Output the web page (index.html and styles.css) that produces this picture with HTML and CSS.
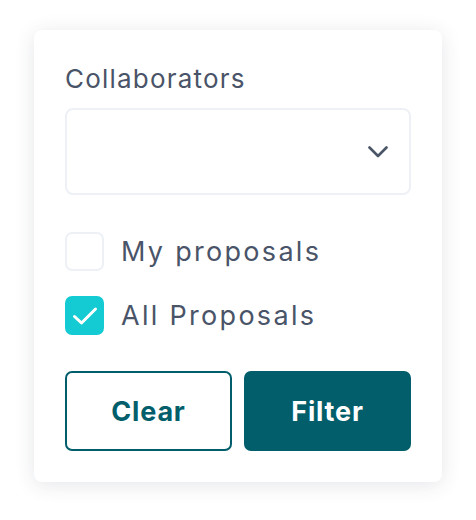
FILE: index.html
```html
<!DOCTYPE html>
<html>
<head>
<meta charset="utf-8">
<link rel="stylesheet" href="styles.css">
</head>
<body>
<div class="card">
  <div class="label">Collaborators</div>
  <div class="select">
    <svg class="chevron" width="20" height="12" viewBox="0 0 20 12"><path d="M1.5 1.5 L10 10 L18.5 1.5" fill="none" stroke="#4a5568" stroke-width="2.6" stroke-linecap="round" stroke-linejoin="round"/></svg>
  </div>
  <div class="options">
    <div class="option">
      <span class="box"></span>
      <span class="opt-text">My proposals</span>
    </div>
    <div class="option">
      <span class="box checked">
        <svg width="26" height="20" viewBox="0 0 26 20"><path d="M2.5 10.5 L9.5 17 L23.5 3" fill="none" stroke="#fff" stroke-width="3" stroke-linecap="round" stroke-linejoin="round"/></svg>
      </span>
      <span class="opt-text">All Proposals</span>
    </div>
  </div>
  <div class="buttons">
    <button class="btn btn-outline">Clear</button>
    <button class="btn btn-fill">Filter</button>
  </div>
</div>
</body>
</html>
```

FILE: styles.css
```css
* { box-sizing: border-box; }
html, body { margin: 0; background: #fff; }
body {
  padding: 30px 34px;
  font-family: Inter, "Noto Sans", sans-serif;
}
.card {
  width: 408px;
  height: 452px;
  background: #fff;
  border-radius: 8px;
  box-shadow: 0 3px 20px rgba(40, 50, 70, 0.12);
  padding: 34px 31px 30px;
  display: flex;
  flex-direction: column;
}
.label {
  font-size: 26px;
  letter-spacing: 1.2px;
  line-height: 30px;
  color: #4a5468;
  margin-bottom: 14px;
}
.select {
  height: 87px;
  border: 2px solid #edf1f6;
  border-radius: 8px;
  display: flex;
  align-items: center;
  justify-content: flex-end;
  padding-right: 21px;
}
.chevron { display: block; }
.options {
  margin-top: 37px;
  display: flex;
  flex-direction: column;
  gap: 25px;
}
.option {
  display: flex;
  align-items: center;
  gap: 17px;
  height: 39px;
}
.box {
  width: 39px;
  height: 39px;
  border: 2px solid #edf1f6;
  border-radius: 7px;
  display: flex;
  align-items: center;
  justify-content: center;
  flex: none;
}
.box.checked {
  background: #14cbd3;
  border-color: #14cbd3;
}
.opt-text {
  font-size: 27px;
  letter-spacing: 2.3px;
  color: #4a5468;
  line-height: 39px;
}
.buttons {
  margin-top: 36px;
  display: flex;
  gap: 12px;
}
.btn {
  flex: 1;
  height: 80px;
  border-radius: 7px;
  font-family: Inter, "Noto Sans", sans-serif;
  font-weight: 700;
  font-size: 27px;
  letter-spacing: 0.8px;
  border: 2px solid #015e6a;
  cursor: pointer;
}
.btn-outline {
  background: #fff;
  color: #015e6a;
}
.btn-fill {
  background: #015e6a;
  color: #fff;
}
```
